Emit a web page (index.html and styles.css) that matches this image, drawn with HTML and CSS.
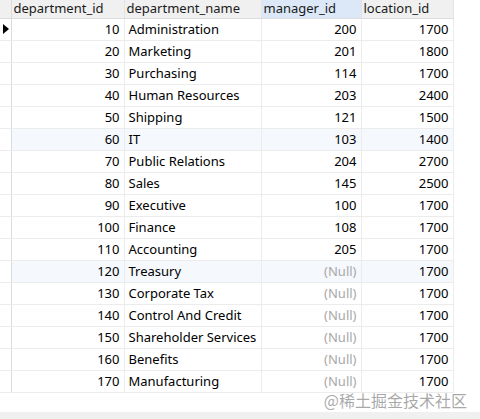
FILE: index.html
```html
<!DOCTYPE html>
<html>
<head>
<meta charset="utf-8">
<link rel="stylesheet" href="styles.css">
</head>
<body>
<div class="page">
  <table class="grid">
    <thead>
      <tr>
        <th class="ind"></th>
        <th class="c1">department_id</th>
        <th class="c2">department_name</th>
        <th class="c3 sel">manager_id</th>
        <th class="c4">location_id</th>
      </tr>
    </thead>
    <tbody>
      <tr><td class="ind"><span class="arrow"></span></td><td class="num">10</td><td>Administration</td><td class="num">200</td><td class="num">1700</td></tr>
      <tr><td class="ind"></td><td class="num">20</td><td>Marketing</td><td class="num">201</td><td class="num">1800</td></tr>
      <tr><td class="ind"></td><td class="num">30</td><td>Purchasing</td><td class="num">114</td><td class="num">1700</td></tr>
      <tr><td class="ind"></td><td class="num">40</td><td>Human Resources</td><td class="num">203</td><td class="num">2400</td></tr>
      <tr><td class="ind"></td><td class="num">50</td><td>Shipping</td><td class="num">121</td><td class="num">1500</td></tr>
      <tr class="alt"><td class="ind"></td><td class="num">60</td><td>IT</td><td class="num">103</td><td class="num">1400</td></tr>
      <tr><td class="ind"></td><td class="num">70</td><td>Public Relations</td><td class="num">204</td><td class="num">2700</td></tr>
      <tr><td class="ind"></td><td class="num">80</td><td>Sales</td><td class="num">145</td><td class="num">2500</td></tr>
      <tr><td class="ind"></td><td class="num">90</td><td>Executive</td><td class="num">100</td><td class="num">1700</td></tr>
      <tr><td class="ind"></td><td class="num">100</td><td>Finance</td><td class="num">108</td><td class="num">1700</td></tr>
      <tr><td class="ind"></td><td class="num">110</td><td>Accounting</td><td class="num">205</td><td class="num">1700</td></tr>
      <tr class="alt"><td class="ind"></td><td class="num">120</td><td>Treasury</td><td class="num null">(Null)</td><td class="num">1700</td></tr>
      <tr><td class="ind"></td><td class="num">130</td><td>Corporate Tax</td><td class="num null">(Null)</td><td class="num">1700</td></tr>
      <tr><td class="ind"></td><td class="num">140</td><td>Control And Credit</td><td class="num null">(Null)</td><td class="num">1700</td></tr>
      <tr><td class="ind"></td><td class="num">150</td><td>Shareholder Services</td><td class="num null">(Null)</td><td class="num">1700</td></tr>
      <tr><td class="ind"></td><td class="num">160</td><td>Benefits</td><td class="num null">(Null)</td><td class="num">1700</td></tr>
      <tr><td class="ind"></td><td class="num">170</td><td>Manufacturing</td><td class="num null">(Null)</td><td class="num">1700</td></tr>
    </tbody>
  </table>
  <div class="spacer"></div>
  <div class="hscroll"></div>
  <div class="watermark">@稀土掘金技术社区</div>
</div>
</body>
</html>
```

FILE: styles.css
```css
html, body {
  margin: 0;
  padding: 0;
  background: #ffffff;
}
.page {
  position: relative;
  width: 480px;
  height: 419px;
  overflow: hidden;
  display: flex;
  flex-direction: column;
  font-family: "Noto Sans", "Noto Sans CJK SC", sans-serif;
  font-size: 13px;
  color: #000000;
}
.grid {
  border-collapse: collapse;
  table-layout: fixed;
  width: 453px;
}
.grid th, .grid td {
  padding: 0 4px;
  white-space: nowrap;
  overflow: hidden;
  box-sizing: border-box;
}
.grid th {
  height: 18px;
  background: #f0f0f0;
  font-weight: normal;
  text-align: left;
  border-right: 1px solid #e3e3e3;
  border-bottom: 1px solid #dcdcdc;
  line-height: 17px;
  color: #1a1a1a;
  padding-left: 2px;
}
.grid th.sel {
  background: #dce8f8;
}
.grid td {
  height: 22px;
  border-right: 1px solid #ececec;
  border-bottom: 1px solid #ececec;
  line-height: 21px;
}
.grid .ind {
  width: 11px;
  padding: 0;
  border-right: 1px solid #dcdcdc;
}
.grid .c1 { width: 113px; }
.grid .c2 { width: 137px; }
.grid .c3 { width: 100px; }
.grid .c4 { width: 92px; }
.grid tr.alt td {
  background: #f5f8fd;
}
.grid tr.alt td.ind { background: #ffffff; }
.num { text-align: right; }
.null { color: #a8a8a8; }
.arrow {
  display: block;
  width: 0;
  height: 0;
  margin-left: 3px;
  border-top: 5px solid transparent;
  border-bottom: 5px solid transparent;
  border-left: 6px solid #000000;
}
.spacer { flex: 1; }
.hscroll {
  height: 7px;
  background: #f0f0f0;
}
.watermark {
  position: absolute;
  right: 13px;
  top: 393px;
  font-family: "Noto Sans CJK SC", sans-serif;
  font-size: 16px;
  color: rgba(140, 140, 140, 0.75);
  line-height: 14px;
}
```
